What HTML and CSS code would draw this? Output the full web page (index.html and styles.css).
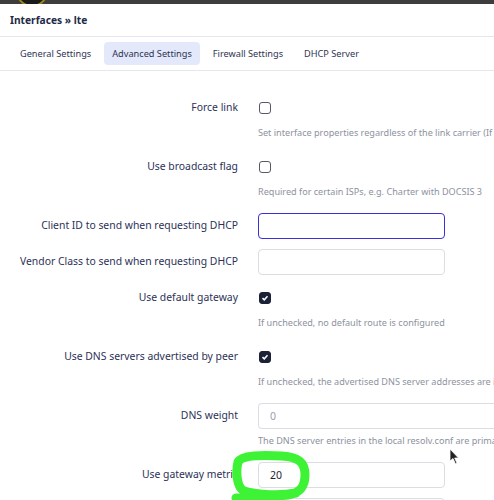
FILE: index.html
```html
<!DOCTYPE html>
<html>
<head>
<meta charset="utf-8">
<link rel="stylesheet" href="styles.css">
</head>
<body>
<div class="topbar"><span class="logo"></span></div>
<div class="page">
  <h2 class="title">Interfaces » lte</h2>
  <nav class="tabs">
    <span class="tab">General Settings</span>
    <span class="tab active">Advanced Settings</span>
    <span class="tab">Firewall Settings</span>
    <span class="tab">DHCP Server</span>
  </nav>
  <div class="form">
    <div class="row">
      <label class="label">Force link</label>
      <div class="ctrl"><span class="cb"></span></div>
      <div class="desc">Set interface properties regardless of the link carrier (If set, carrier sense events do not invoke hotplug handlers).</div>
    </div>
    <div class="row">
      <label class="label">Use broadcast flag</label>
      <div class="ctrl"><span class="cb"></span></div>
      <div class="desc">Required for certain ISPs, e.g. Charter with DOCSIS 3</div>
    </div>
    <div class="row">
      <label class="label">Client ID to send when requesting DHCP</label>
      <div class="ctrl"><span class="input focus"></span></div>
    </div>
    <div class="row">
      <label class="label">Vendor Class to send when requesting DHCP</label>
      <div class="ctrl"><span class="input"></span></div>
    </div>
    <div class="row">
      <label class="label">Use default gateway</label>
      <div class="ctrl"><span class="cb on"><svg viewBox="0 0 12 12" width="12" height="12"><path d="M3 6.2 L5.1 8.2 L9 3.8" fill="none" stroke="#fff" stroke-width="1.8"/></svg></span></div>
      <div class="desc">If unchecked, no default route is configured</div>
    </div>
    <div class="row">
      <label class="label">Use DNS servers advertised by peer</label>
      <div class="ctrl"><span class="cb on"><svg viewBox="0 0 12 12" width="12" height="12"><path d="M3 6.2 L5.1 8.2 L9 3.8" fill="none" stroke="#fff" stroke-width="1.8"/></svg></span></div>
      <div class="desc">If unchecked, the advertised DNS server addresses are ignored</div>
    </div>
    <div class="row">
      <label class="label">DNS weight</label>
      <div class="ctrl"><span class="input wide placeholder">0</span></div>
      <div class="desc">The DNS server entries in the local resolv.conf are primarily sorted by the weight specified here</div>
    </div>
    <div class="row">
      <label class="label">Use gateway metric</label>
      <div class="ctrl"><span class="input">20</span></div>
    </div>
    <div class="row">
      <label class="label"></label>
      <div class="ctrl"><span class="input"></span></div>
    </div>
  </div>
</div>
<svg class="scribble" width="494" height="500" viewBox="0 0 494 500">
  <path d="M296 493 C280 496 258 495 244 491 C236 487 236 470 238 462 C242 455 262 455 282 456 C298 457 305 462 305 475 C305 487 300 493 288 495 C270 497 250 497 236 498" fill="none" stroke="#3ef235" stroke-width="9" stroke-linecap="round" stroke-linejoin="round"/>
</svg>
<svg class="cursor" width="12" height="18" viewBox="0 0 12 18">
  <path d="M1 1 L1 13 L4 10.5 L6.5 16 L8 15.3 L5.7 10 L9.5 10 Z" fill="#222" stroke="#fff" stroke-width="0.8"/>
</svg>
</body>
</html>
```

FILE: styles.css
```css
html, body {
  margin: 0;
  padding: 0;
  background: #fff;
  overflow: hidden;
  width: 494px;
  height: 500px;
  font-family: "Noto Sans", "Open Sans", sans-serif;
  color: #2b3054;
}
.topbar {
  height: 4px;
  background: #3d3d3d;
  overflow: hidden;
  padding-left: 16px;
}
.logo {
  display: block;
  width: 28px;
  height: 28px;
  margin-top: -25px;
  border-radius: 50%;
  background: #1a1a1a;
  border: 2px solid #9c8520;
}
.page {
  position: relative;
}
.title {
  margin: 0;
  padding: 0 10px;
  height: 32px;
  line-height: 32px;
  font-size: 10.2px;
  font-weight: 700;
  color: #232a45;
  border-bottom: 1px solid #e6e7ec;
}
.tabs {
  display: flex;
  align-items: center;
  gap: 5px;
  padding: 5px 0 5px 12px;
  border-bottom: 1px solid #e6e7ec;
  height: 23px;
}
.tab {
  font-size: 9.2px;
  color: #2e3452;
  padding: 0 8px;
  line-height: 23px;
  border-radius: 4px;
  white-space: nowrap;
}
.tab.active {
  background: #e3e8fb;
}
.form {
  padding: 24px 0 0 8px;
}
.row {
  display: grid;
  grid-template-columns: 230px auto;
  column-gap: 20px;
  margin-bottom: 11px;
}
.label {
  font-size: 10.4px;
  text-align: right;
  line-height: 25px;
  white-space: nowrap;
  color: #2c3157;
}
.ctrl {
  height: 25px;
  display: flex;
  align-items: center;
}
.desc {
  grid-column: 2;
  font-size: 9.1px;
  line-height: 13px;
  color: #8d929e;
  margin: 6px 0 4px;
  white-space: nowrap;
  overflow: hidden;
  width: 236px;
}
.cb {
  display: flex;
  align-items: center;
  justify-content: center;
  box-sizing: border-box;
  width: 12px;
  height: 12px;
  margin-left: 1px;
  border: 1.5px solid #555a66;
  border-radius: 3px;
}
.cb.on {
  background: #1b2136;
  border-color: #1b2136;
}
.input {
  box-sizing: border-box;
  display: block;
  width: 187px;
  height: 26px;
  border: 1px solid #dcdde3;
  border-radius: 4px;
  font-size: 10.5px;
  line-height: 24px;
  padding-left: 11px;
  color: #1f2433;
}
.input.focus {
  border: 1.5px solid #3a2fd8;
}
.input.wide {
  width: 236px;
  border-right: none;
  border-radius: 4px 0 0 4px;
}
.placeholder {
  color: #9a9ea8;
}
.scribble {
  position: absolute;
  left: 0;
  top: 0;
  pointer-events: none;
}
.cursor {
  position: absolute;
  left: 449px;
  top: 448px;
}
```
